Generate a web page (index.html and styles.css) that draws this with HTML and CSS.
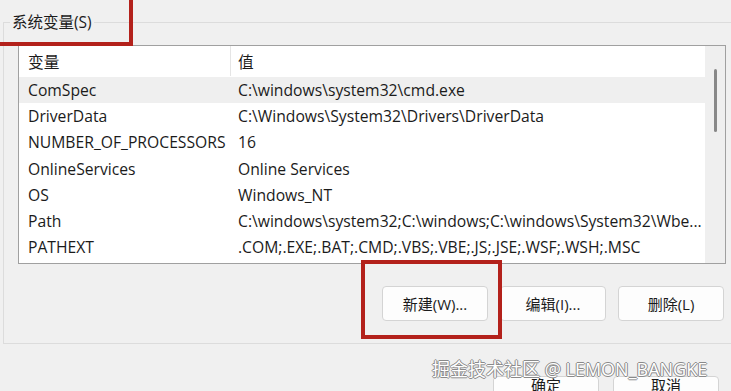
FILE: index.html
```html
<!DOCTYPE html>
<html lang="zh-CN">
<head>
    <meta charset="UTF-8">
    <meta name="viewport" content="width=device-width, initial-scale=1.0">
    <title>系统变量</title>
    <link rel="stylesheet" href="styles.css">
</head>
<body>
    <fieldset class="group">
        <legend>系统变量(S)</legend>
        <div class="listbox">
            <div class="list">
                <div class="row head">
                    <div class="cell name">变量</div>
                    <div class="cell value">值</div>
                </div>
                <div class="row selected">
                    <div class="cell name">ComSpec</div>
                    <div class="cell value">C:\windows\system32\cmd.exe</div>
                </div>
                <div class="row">
                    <div class="cell name">DriverData</div>
                    <div class="cell value">C:\Windows\System32\Drivers\DriverData</div>
                </div>
                <div class="row">
                    <div class="cell name">NUMBER_OF_PROCESSORS</div>
                    <div class="cell value">16</div>
                </div>
                <div class="row">
                    <div class="cell name">OnlineServices</div>
                    <div class="cell value">Online Services</div>
                </div>
                <div class="row">
                    <div class="cell name">OS</div>
                    <div class="cell value">Windows_NT</div>
                </div>
                <div class="row">
                    <div class="cell name">Path</div>
                    <div class="cell value">C:\windows\system32;C:\windows;C:\windows\System32\Wbe...</div>
                </div>
                <div class="row">
                    <div class="cell name">PATHEXT</div>
                    <div class="cell value">.COM;.EXE;.BAT;.CMD;.VBS;.VBE;.JS;.JSE;.WSF;.WSH;.MSC</div>
                </div>
            </div>
            <div class="scrollbar"><div class="thumb"></div></div>
        </div>
        <div class="actions">
            <button class="btn new">新建(W)...</button>
            <button class="btn">编辑(I)...</button>
            <button class="btn">删除(L)</button>
        </div>
    </fieldset>

    <div class="footer">
        <button class="btn">确定</button>
        <button class="btn">取消</button>
    </div>

    <div class="mark mark-title"></div>
    <div class="mark mark-new"></div>
    <div class="watermark">掘金技术社区 @ LEMON_BANGKE</div>
</body>
</html>
```

FILE: styles.css
```css
html, body {
    margin: 0;
    height: 100%;
}
body {
    position: relative;
    overflow: hidden;
    padding-top: 12px;
    box-sizing: border-box;
    background-color: #f0f0f0;
    color: #1b1b1b;
    font-family: "Open Sans", "Noto Sans CJK SC", sans-serif;
    font-size: 15.7px;
}
.group {
    margin: 0 -40px 0 3px;
    padding: 0 54px 22px 14px;
    border: 1px solid #dcdcdc;
    border-radius: 0;
}
.group legend {
    margin-left: -8px;
    padding: 0 2px;
    line-height: 20px;
    font-size: 15.5px;
}
.listbox {
    display: flex;
    width: 706px;
    height: 217px;
    margin-top: 13px;
    border: 1px solid #a0a0a0;
    background-color: #fff;
}
.list {
    flex: 1;
}
.row {
    display: flex;
    height: 26.2px;
    align-items: center;
}
.row.head {
    height: 30px;
    margin-bottom: 1px;
}
.row.selected {
    background-color: #efefef;
}
.cell {
    white-space: nowrap;
    overflow: hidden;
}
.name {
    width: 202px;
    padding-left: 9px;
}
.value {
    flex: 1;
    padding-left: 8px;
}
.head .value {
    align-self: stretch;
    display: flex;
    align-items: center;
    border-left: 1px solid #e5e5e5;
    padding-left: 7px;
}
.scrollbar {
    width: 20px;
    background-color: #efefef;
    display: flex;
    justify-content: center;
}
.thumb {
    width: 3px;
    height: 63px;
    margin-top: 23px;
    border-radius: 2px;
    background-color: #888;
}
.actions {
    display: flex;
    justify-content: flex-end;
    gap: 12px;
    width: 706px;
    margin-top: 22px;
}
.btn {
    width: 106px;
    height: 35px;
    border: 1px solid #d4d4d4;
    border-radius: 4px;
    background-color: #fdfdfd;
    color: #1b1b1b;
    font-family: inherit;
    font-size: 15px;
}
.footer {
    display: flex;
    gap: 14px;
    margin: 32px 0 0 493px;
}
.footer .btn {
    padding: 0 0 18px;
    line-height: 16px;
}
.mark {
    position: absolute;
    border: 4px solid #b3211b;
}
.mark-title {
    left: -4px;
    top: -4px;
    width: 129px;
    height: 42px;
}
.mark-new {
    left: 361px;
    top: 260px;
    width: 133px;
    height: 71px;
}
.watermark {
    position: absolute;
    left: 432px;
    top: 355px;
    font-size: 18px;
    color: #fff;
    white-space: nowrap;
    text-shadow: 1px 0 0 #8a8a8a, -1px 0 0 #8a8a8a, 0 1px 0 #8a8a8a, 0 -1px 0 #8a8a8a;
}
```
